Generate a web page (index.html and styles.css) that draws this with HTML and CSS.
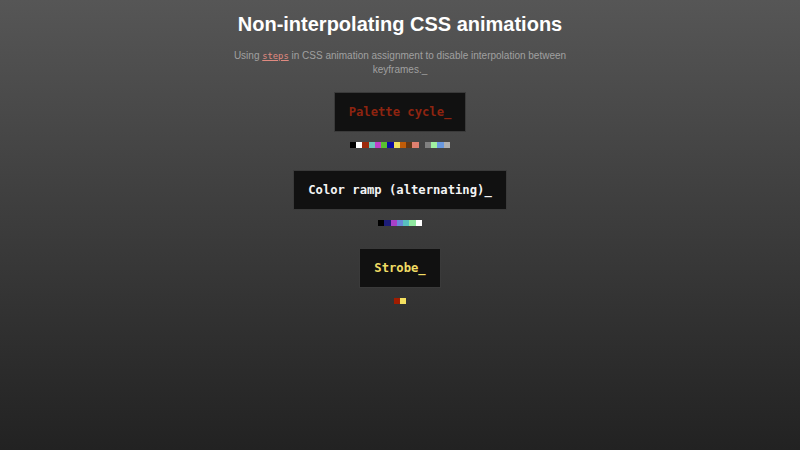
FILE: index.html
```html
<!DOCTYPE html>
<html lang="en">
<head>
    <meta charset="UTF-8">
    <meta name="viewport" content="width=device-width, initial-scale=1.0">
    <title>Non-interpolating CSS animations</title>
    <link rel="stylesheet" href="styles.css">
</head>
<body>
    <div class="page">
        <h1>Non-interpolating CSS animations</h1>
        <p class="intro">Using <code>steps</code> in CSS animation assignment to disable interpolation between keyframes.<span class="cursor">_</span></p>

        <div class="demo">
            <div class="screen palette">Palette cycle<span class="cursor">_</span></div>
            <div class="swatches">
                <span style="background:#000000"></span>
                <span style="background:#ffffff"></span>
                <span style="background:#9c2a0c"></span>
                <span style="background:#6cc8b8"></span>
                <span style="background:#c040c8"></span>
                <span style="background:#58c030"></span>
                <span style="background:#0c0ca0"></span>
                <span style="background:#f0e060"></span>
                <span style="background:#c05c08"></span>
                <span style="background:#603818"></span>
                <span style="background:#e08070"></span>
                <span style="background:#444444"></span>
                <span style="background:#808080"></span>
                <span style="background:#a0f0a0"></span>
                <span style="background:#6898e0"></span>
                <span style="background:#b0b0b0"></span>
            </div>
        </div>

        <div class="demo">
            <div class="screen ramp">Color ramp (alternating)<span class="cursor">_</span></div>
            <div class="swatches">
                <span style="background:#000000"></span>
                <span style="background:#1c1c78"></span>
                <span style="background:#a840c8"></span>
                <span style="background:#6888d8"></span>
                <span style="background:#58c0c0"></span>
                <span style="background:#90e8a0"></span>
                <span style="background:#ffffff"></span>
            </div>
        </div>

        <div class="demo">
            <div class="screen strobe">Strobe<span class="cursor">_</span></div>
            <div class="swatches">
                <span style="background:#a01c00"></span>
                <span style="background:#f4e060"></span>
            </div>
        </div>
    </div>
</body>
</html>
```

FILE: styles.css
```css
*{margin: 0; padding: 0; box-sizing: border-box;}
html{min-height: 100%; background: linear-gradient(#565656, #222222);}
body{min-height: 100vh; font-family: "Liberation Sans", Arial, sans-serif; color: #fff;}
.page{display: flex; flex-direction: column; align-items: center; padding-top: 12px;}
h1{font-size: 20px; font-weight: bold; line-height: 24px;}
.intro{max-width: 345px; margin-top: 13px; font-size: 10px; line-height: 13px; color: #a0a0a0; text-align: center;}
.intro code{font-family: "DejaVu Sans Mono", monospace; font-size: 8.8px; color: #e08a80; text-decoration: underline;}
.demo{display: flex; flex-direction: column; align-items: center; margin-top: 16px;}
.demo + .demo{margin-top: 22px;}
.screen{height: 40px; padding: 0 14px; display: flex; align-items: center; background: #111; border: 1px solid #3a3a3a; font-family: "DejaVu Sans Mono", monospace; font-size: 12.2px; font-weight: bold;}
.palette{color: #8e2410;}
.ramp{color: #f4f4f4;}
.strobe{color: #f0dc64;}
.swatches{display: flex; margin-top: 10px;}
.swatches span{width: 6.25px; height: 6px;}
```
